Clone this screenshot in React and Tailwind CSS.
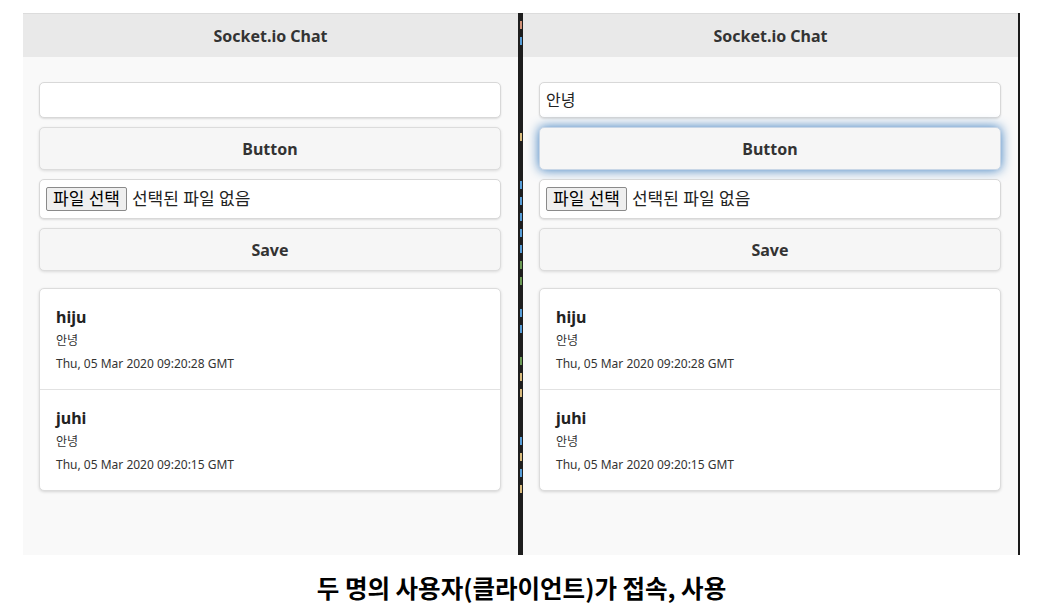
import React from "react";

const messages = [
  { name: "hiju", text: "안녕", date: "Thu, 05 Mar 2020 09:20:28 GMT" },
  { name: "juhi", text: "안녕", date: "Thu, 05 Mar 2020 09:20:15 GMT" },
];

// colour flecks of the code editor peeking out between the two windows
const codeBits = [
  "bg-[#ce9178]", "bg-[#569cd6]", "", "", "", "", "", "bg-[#d7ba7d]", "", "",
  "bg-[#569cd6]", "bg-[#569cd6]", "bg-[#569cd6]", "bg-[#569cd6]", "bg-[#569cd6]",
  "bg-[#6a9955]", "bg-[#6a9955]", "", "bg-[#569cd6]", "bg-[#569cd6]", "",
  "bg-[#6a9955]", "bg-[#d7ba7d]", "bg-[#d7ba7d]", "", "", "bg-[#569cd6]",
  "bg-[#d7ba7d]", "bg-[#569cd6]", "bg-[#d7ba7d]",
];

const Panel = ({ value, focused }) => (
  <div className="w-[495px] h-full flex flex-col bg-[#f9f9f9]">
    <div className="h-[44px] shrink-0 flex items-center justify-center bg-[#e9e9e9] border-t border-[#dcdcdc] text-[16px] font-bold text-[#333]">
      Socket.io Chat
    </div>

    <div className="pt-[25px] pl-[16px] pr-[17px] flex flex-col">
      <div className="h-[36px] bg-white border border-[#d8d8d8] rounded-[5px] shadow-[0_1px_2px_rgba(0,0,0,0.12)] flex items-center px-[6px] text-[16px] text-[#222]">
        {value}
      </div>

      <div
        className={`mt-[9px] h-[43px] bg-[#f6f6f6] border rounded-[5px] flex items-center justify-center text-[16px] font-bold text-[#333] ${
          focused
            ? "border-[#c8d6e6] shadow-[0_0_12px_#387bbe]"
            : "border-[#dcdcdc] shadow-[0_1px_3px_rgba(0,0,0,0.12)]"
        }`}
      >
        Button
      </div>

      <div className="mt-[9px] h-[40px] bg-white border border-[#d8d8d8] rounded-[5px] shadow-[0_1px_2px_rgba(0,0,0,0.12)] flex items-center pl-[6px] text-[17px] text-[#222]">
        <span className="h-[24px] px-[6px] flex items-center bg-[#efefef] border border-[#8a8a8a] rounded-[2px] text-black">
          파일 선택
        </span>
        <span className="ml-[5px]">선택된 파일 없음</span>
      </div>

      <div className="mt-[9px] h-[43px] bg-[#f6f6f6] border border-[#dcdcdc] rounded-[5px] shadow-[0_1px_3px_rgba(0,0,0,0.12)] flex items-center justify-center text-[16px] font-bold text-[#333]">
        Save
      </div>

      <div className="mt-[17px] bg-white border border-[#dcdcdc] rounded-[5px] shadow-[0_1px_3px_rgba(0,0,0,0.15)]">
        {messages.map((m, i) => (
          <div
            key={m.name}
            className={`px-[16px] pt-[17px] pb-[16px] ${i > 0 ? "border-t border-[#e2e2e2]" : ""}`}
          >
            <div className="h-[22px] flex items-center text-[16px] font-bold text-[#222]">{m.name}</div>
            <div className="mt-[4px] h-[18px] flex items-center text-[12px] text-[#333]">{m.text}</div>
            <div className="mt-[5px] h-[18px] flex items-center text-[12px] text-[#333]">{m.date}</div>
          </div>
        ))}
      </div>
    </div>
  </div>
);

export default function App() {
  return (
    <div className="w-[1050px] h-[616px] bg-white pt-[13px] pl-[23px] font-['Noto_Sans','Noto_Sans_CJK_KR',sans-serif] overflow-hidden">
      <div className="flex h-[542px] w-[997px]">
        <Panel value="" focused={false} />
        <div className="w-[5px] h-full bg-[#1e1e1e] flex flex-col pt-[4px]">
          {codeBits.map((cls, i) => (
            <div key={i} className="h-[16px] flex items-center justify-end pr-[1px]">
              {cls && <div className={`w-[2px] h-[8px] ${cls}`} />}
            </div>
          ))}
        </div>
        <Panel value="안녕" focused />
        <div className="w-[2px] h-full bg-[#1a1a1a]" />
      </div>
      <div className="w-[997px] mt-[18px] text-center text-[24.5px] leading-[30px] font-bold text-black font-['Noto_Sans_CJK_KR',sans-serif]">
        두 명의 사용자(클라이언트)가 접속, 사용
      </div>
    </div>
  );
}
